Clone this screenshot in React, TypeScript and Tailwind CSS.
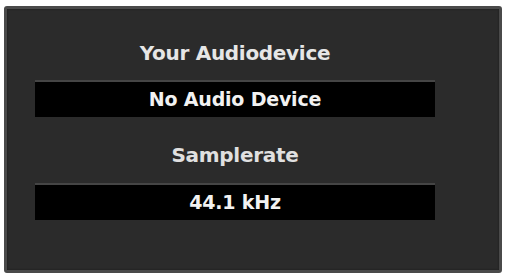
export default function App() {
  return (
    <div className="w-[506px] h-[276px] bg-white pt-[6px] pl-[4px] pr-[4px] pb-[3px]" style={{ fontFamily: '"DejaVu Sans", sans-serif' }}>
      <div className="h-full w-full rounded-[3px] border-[3px] border-[#4a4a4a] bg-[#2b2b2b] shadow-[inset_0_0_2px_#1a1a1a]">
        <div className="w-[400px] ml-[28px] pt-[33px] flex flex-col items-center">
          <div className="text-[20px] font-bold text-[#e6e6e6] leading-[22px] tracking-[-0.3px]">Your Audiodevice</div>
          <div className="mt-[16px] w-full h-[37px] bg-black border-t-2 border-[#454545] flex items-center justify-center text-[19px] font-bold text-[#f2f2f2] tracking-[-0.2px]">
            No Audio Device
          </div>
          <div className="mt-[27px] text-[20px] font-bold text-[#e0e0e0] leading-[22px] tracking-[-0.3px]">Samplerate</div>
          <div className="mt-[17px] w-full h-[37px] bg-black border-t-2 border-[#454545] flex items-center justify-center text-[19px] font-bold text-[#f2f2f2] tracking-[-0.2px]">
            44.1 kHz
          </div>
        </div>
      </div>
    </div>
  );
}
